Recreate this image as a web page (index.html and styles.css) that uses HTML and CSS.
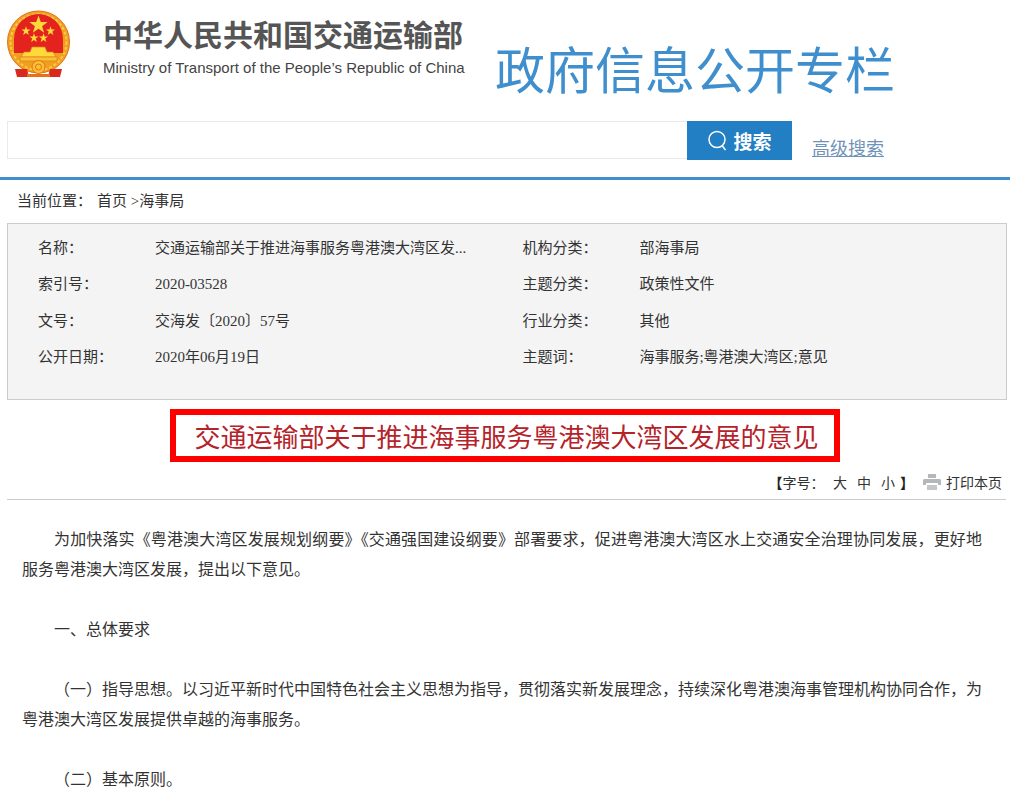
FILE: index.html
```html
<!DOCTYPE html>
<html lang="zh-CN">
<head>
    <meta charset="UTF-8">
    <title>交通运输部关于推进海事服务粤港澳大湾区发展的意见</title>
    <link rel="stylesheet" href="styles.css">
</head>
<body>
    <div class="top">
        <svg class="emblem" width="64" height="70" viewBox="0 0 64 70">
            <defs>
                <path id="star" d="M0-5 L1.2-1.6 4.8-1.6 1.9 .6 3 4.1 0 2 -3 4.1 -1.9 .6 -4.8-1.6 -1.2-1.6Z" fill="#ffd83a"/>
            </defs>
            <circle cx="31.500" cy="33" r="31" fill="#f0a020" stroke="#e8701a" stroke-width="1"/>
            <circle cx="31.500" cy="33" r="28" fill="none" stroke="#f9c94a" stroke-width="2" stroke-dasharray="3 2"/>
            <path d="M7 44 V30 A24.500 25 0 0 1 56 30 V44 Z" fill="#e4231f"/>
            <use href="#star" transform="translate(31.500 16) scale(1.9)"/>
            <use href="#star" transform="translate(19 22) scale(.95)"/>
            <use href="#star" transform="translate(43.500 22) scale(.95)"/>
            <use href="#star" transform="translate(27 29) scale(.95)"/>
            <use href="#star" transform="translate(36.500 29) scale(.95)"/>
            <path d="M25 38 h13 l2 5 h6 l3 5 H14 l3-5 h6z" fill="#ffd83a" stroke="#d9801c" stroke-width=".7"/>
            <rect x="13" y="48" width="37" height="4" fill="#f7c136" stroke="#e8701a" stroke-width=".6"/>
            <circle cx="31.500" cy="58" r="6.500" fill="#f7c136" stroke="#e8701a"/>
            <circle cx="31.500" cy="58" r="3" fill="none" stroke="#e8701a"/>
            <path d="M8 60 h12 l2 8 H10z M55 60 H43 l-2 8 H53z" fill="#d8291c"/>
            <rect x="20" y="65" width="23" height="3" fill="#e8701a"/>
        </svg>
        <div class="brand">
            <div class="brand-cn">中华人民共和国交通运输部</div>
            <div class="brand-en">Ministry of Transport of the People’s Republic of China</div>
        </div>
        <div class="column-name">政府信息公开专栏</div>
    </div>

    <div class="search">
        <div class="search-input"></div>
        <div class="search-btn">
            <svg width="22" height="24" viewBox="0 0 22 24">
                <circle cx="10" cy="10.5" r="8" fill="none" stroke="#fff" stroke-width="1.500"/>
                <path d="M15 16.500 L18.500 21" stroke="#fff" stroke-width="1.500" fill="none"/>
            </svg>
            <span>搜索</span>
        </div>
        <a class="search-more" href="#">高级搜索</a>
    </div>

    <div class="crumb"><span class="crumb-label">当前位置：</span>首页 &gt;海事局</div>

    <div class="info">
        <div class="info-row">
            <div class="info-key">名称：</div><div class="info-val">交通运输部关于推进海事服务粤港澳大湾区发...</div>
            <div class="info-key key-2">机构分类：</div><div class="info-val">部海事局</div>
        </div>
        <div class="info-row">
            <div class="info-key">索引号：</div><div class="info-val">2020-03528</div>
            <div class="info-key key-2">主题分类：</div><div class="info-val">政策性文件</div>
        </div>
        <div class="info-row">
            <div class="info-key">文号：</div><div class="info-val">交海发〔2020〕57号</div>
            <div class="info-key key-2">行业分类：</div><div class="info-val">其他</div>
        </div>
        <div class="info-row">
            <div class="info-key">公开日期：</div><div class="info-val">2020年06月19日</div>
            <div class="info-key key-2">主题词：</div><div class="info-val">海事服务;粤港澳大湾区;意见</div>
        </div>
    </div>

    <h1 class="doc-title">交通运输部关于推进海事服务粤港澳大湾区发展的意见</h1>

    <div class="tools">
        <span class="font-size"><b>【</b>字号： <a>大</a><a>中</a><a>小</a><b>】</b></span>
        <svg class="print-icon" width="18" height="16" viewBox="0 0 18 16">
            <rect x="5" y="0" width="8" height="4" fill="#b5b8bb"/>
            <path d="M1 5 H17 L18 6 V11 H15 V9 H3 V11 H0 V6Z" fill="#b5b8bb"/>
            <rect x="4" y="11" width="10" height="5" fill="#c4c7ca"/>
        </svg>
        <span>打印本页</span>
    </div>

    <div class="content">
        <p>为加快落实《粤港澳大湾区发展规划纲要》《交通强国建设纲要》部署要求，促进粤港澳大湾区水上交通安全治理协同发展，更好地服务粤港澳大湾区发展，提出以下意见。</p>
        <p>一、总体要求</p>
        <p>（一）指导思想。以习近平新时代中国特色社会主义思想为指导，贯彻落实新发展理念，持续深化粤港澳海事管理机构协同合作，为粤港澳大湾区发展提供卓越的海事服务。</p>
        <p>（二）基本原则。</p>
    </div>
</body>
</html>
```

FILE: styles.css
```css
html {
    overflow: hidden;
}
body {
    margin: 0;
    height: 792px;
    overflow: hidden;
    background: #fff;
    color: #333;
    font-family: "Liberation Serif", "Noto Sans CJK SC", serif;
    font-size: 15px;
}
.top {
    display: flex;
    height: 121px;
    box-sizing: border-box;
    padding: 9px 0 0 7px;
}
.emblem {
    flex: none;
}
.brand {
    width: 392px;
    margin-left: 32px;
    padding-top: 3px;
}
.brand-cn {
    color: #555;
    font-family: "Noto Sans CJK SC", sans-serif;
    font-size: 30px;
    font-weight: 700;
    line-height: 42px;
    white-space: nowrap;
}
.brand-en {
    margin-top: 4px;
    color: #444;
    font-family: "Liberation Sans", sans-serif;
    font-size: 15px;
    line-height: 20px;
    white-space: nowrap;
}
.column-name {
    color: #3f8fcf;
    font-family: "Noto Sans CJK SC", sans-serif;
    font-size: 50px;
    line-height: 72px;
    padding-top: 22px;
    white-space: nowrap;
}
.search {
    display: flex;
    align-items: flex-start;
    height: 56px;
    padding-left: 7px;
    border-bottom: 3px solid #3f8fcf;
}
.search-input {
    width: 680px;
    height: 38px;
    box-sizing: border-box;
    border: 1px solid #eaeaea;
    border-right: 0;
}
.search-btn {
    display: flex;
    align-items: center;
    justify-content: center;
    gap: 4px;
    width: 105px;
    height: 39px;
    background: #227fc4;
    color: #fff;
    font-size: 19px;
    font-weight: 700;
}
.search-more {
    margin: 15px 0 0 20px;
    color: #6f93b8;
    font-size: 18px;
    line-height: 26px;
}
.crumb {
    padding-left: 17px;
    height: 43px;
    line-height: 42px;
}
.crumb-label {
    margin-right: 5px;
}
.info {
    margin: 0 3px 0 7px;
    height: 177px;
    box-sizing: border-box;
    padding-top: 6px;
    background: #f4f4f4;
    border: 1px solid #ccc;
}
.info-row {
    display: flex;
    height: 36.4px;
    line-height: 36px;
    white-space: nowrap;
}
.info-key {
    width: 117px;
    padding-left: 30px;
}
.key-2 {
    padding-left: 1px;
    width: 117px;
}
.info-val {
    width: 367px;
}
.doc-title {
    width: 670px;
    height: 53px;
    box-sizing: border-box;
    margin: 9px auto 0;
    padding-left: 3px;
    border: 6px solid #f00;
    color: #b5232a;
    font-size: 26px;
    font-weight: 400;
    line-height: 48px;
    text-align: center;
}
.tools {
    display: flex;
    align-items: center;
    justify-content: flex-end;
    height: 38px;
    margin: 0 4px 0 7px;
    padding: 2px 4px 0 0;
    box-sizing: border-box;
    border-bottom: 1px solid #ccc;
    font-size: 14px;
}
.font-size a {
    margin-left: 5px;
    margin-right: 5px;
}
.font-size b {
    color: #222;
}
.print-icon {
    margin: 1px 5px 0 9px;
}
.content {
    padding: 25px 28px 0 22px;
    font-size: 16px;
    line-height: 30px;
}
.content p {
    margin: 0 0 30px;
    text-indent: 2em;
    text-align: justify;
}
```
